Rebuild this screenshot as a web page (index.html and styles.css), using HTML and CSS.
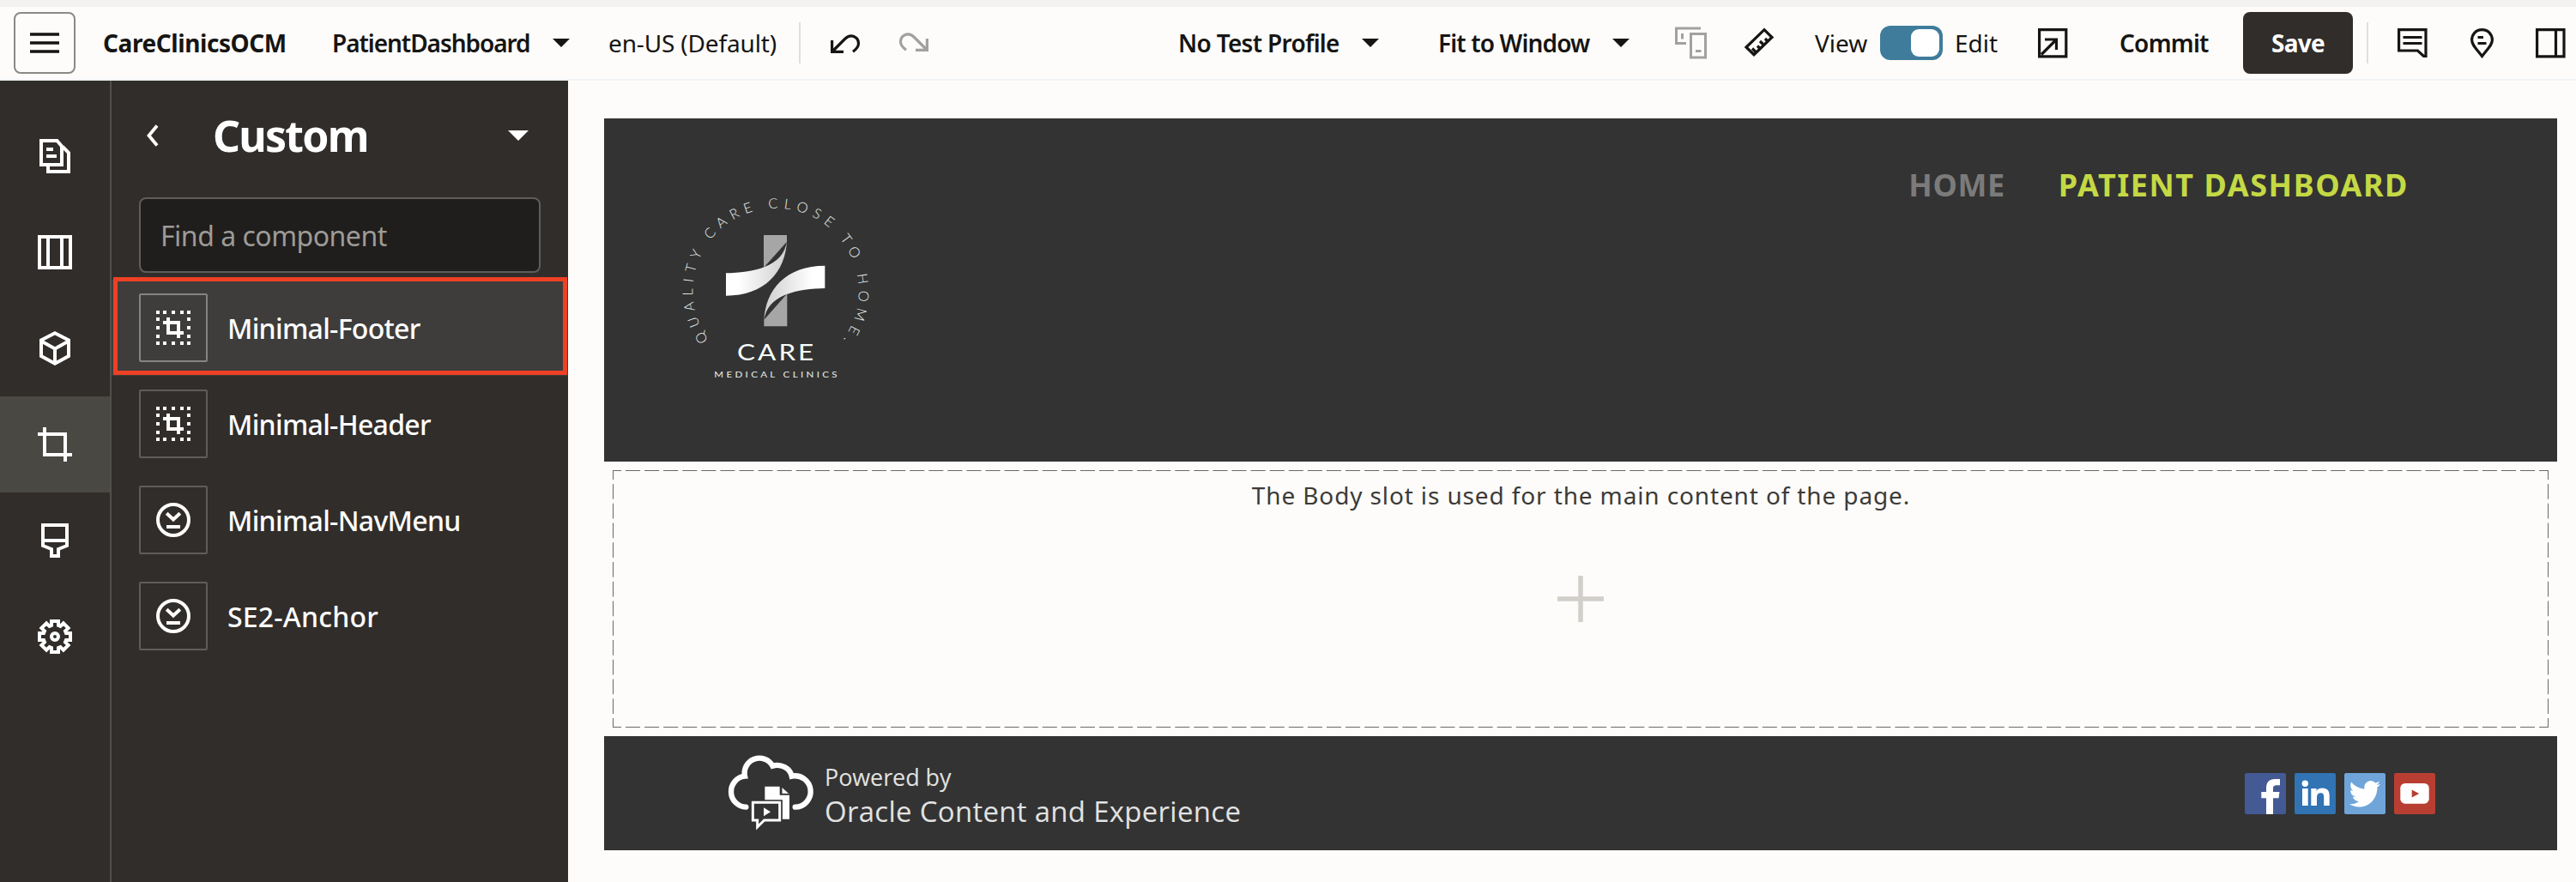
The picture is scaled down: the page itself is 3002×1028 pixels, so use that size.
FILE: index.html
```html
<!DOCTYPE html>
<html lang="en">
<head>
<meta charset="utf-8">
<title>CareClinicsOCM - PatientDashboard</title>
<link rel="stylesheet" href="styles.css">
</head>
<body>
<svg class="defs" width="0" height="0" aria-hidden="true">
  <symbol id="caret" viewBox="0 0 20 10"><path d="M0 0H20L10 10Z" fill="currentColor"/></symbol>
  <symbol id="template" viewBox="0 0 40 40">
    <path d="M0 2H4M8 2H12M18 2H22M28 2H32M36 2H40M0 10H4M36 10H40M0 20H4M36 20H40M0 30H4M36 30H40M0 38H4M8 38H12M18 38H22M28 38H32M36 38H40M8 14H28M14 8V28M12 26H32M26 12V32" fill="none" stroke="currentColor" stroke-width="4"/>
  </symbol>
  <symbol id="widget" viewBox="0 0 40 40">
    <g fill="none" stroke="currentColor" stroke-width="4"><circle cx="20" cy="20" r="18"/><path d="M12.2 12.2L20 19.5L27.8 12.2M12 28H28"/></g>
  </symbol>
</svg>

<header class="topbar">
  <button class="menu" aria-label="Menu"><svg width="34" height="24" viewBox="0 0 34 24"><path d="M0 2H34M0 12H34M0 22H34" stroke="currentColor" stroke-width="3.6"/></svg></button>
  <span class="label site">CareClinicsOCM</span>
  <span class="label page">PatientDashboard</span>
  <svg class="caret" width="20" height="10"><use href="#caret"/></svg>
  <span class="label locale">en-US (Default)</span>
  <span class="divider divider-left"></span>
  <svg class="icon undo" width="34" height="34" viewBox="0 0 34 34"><path d="M1.6 14V27.3H15M2 27L16.5 12.5C24 5 33 10.5 32.4 18.5C32.2 22.5 29 25 26 27.3" /></svg>
  <svg class="icon redo" width="34" height="34" viewBox="0 0 34 34"><path d="M32.4 12V25.3H19M32 25L17.5 10.5C10 3 1 8.5 1.6 16.5C1.8 20.5 5 23 8 25.3" /></svg>

  <span class="label profile">No Test Profile</span>
  <svg class="caret" width="20" height="10"><use href="#caret"/></svg>
  <span class="label fit">Fit to Window</span>
  <svg class="caret" width="20" height="10"><use href="#caret"/></svg>
  <svg class="icon devices" width="38" height="38" viewBox="0 0 38 38"><path d="M30 2H1.5V19.5H13M8.5 8V14.5M18.5 8.5H35.5V36H18.5ZM24 28.5H30.5"/></svg>
  <svg class="icon ruler" width="36" height="36" viewBox="0 0 36 36"><path d="M24 2.7L33 11.5L12 31.7L3 23Z"/><path d="M14.5 29L10 24.5M19 24.5L16 21.5M23.5 20.5L19 16M28 16L25 13"/></svg>
  <span class="label view">View</span>
  <span class="toggle"><span class="knob"></span></span>
  <span class="label edit">Edit</span>
  <svg class="icon open" width="35" height="35" viewBox="0 0 35 35"><path d="M1.6 1.6H32.8V32.8H1.6ZM4 30.5L21 13.5M8 13H21.5V25"/></svg>
  <span class="label commit">Commit</span>
  <button class="label save">Save</button>
  <span class="divider divider-right"></span>
  <svg class="icon comment" width="35" height="35" viewBox="0 0 35 35"><path d="M1.6 1.6H33V32.5H30.5L23.5 26H1.6ZM6.5 10.5H28.5M6.5 17.5H28.5"/></svg>
  <svg class="icon pin" width="35" height="35" viewBox="0 0 35 35"><path d="M17.5 1.7C10 1.7 5.6 7.5 5.6 13.5C5.6 19.5 11 24 17.5 32.5C24 24 29.4 19.5 29.4 13.5C29.4 7.5 25 1.7 17.5 1.7ZM12.5 10.5H19M12.5 17.5H22.5"/></svg>
  <svg class="icon panel-toggle" width="35" height="35" viewBox="0 0 35 35"><path d="M1.6 1.6H33V32.8H1.6ZM23.5 2V33"/></svg>
</header>

<div class="workspace">
  <nav class="rail">
    <a class="rail-item"><svg width="40" height="40" viewBox="0 0 40 40"><path d="M4 2H22.5L28 8.5V30H4ZM12 32V38H36V16L29 9M10 12H18M10 20H22"/></svg></a>
    <a class="rail-item"><svg width="40" height="40" viewBox="0 0 40 40"><path d="M2 2H38V38H2ZM12 2V38M28 2V38"/></svg></a>
    <a class="rail-item"><svg width="40" height="40" viewBox="0 0 40 40"><path d="M20 2.3L36 10.5V29L20 37.7L4 29V10.5ZM4 11.5L20 20.5L36 11.5M20 20.5V37"/></svg></a>
    <a class="rail-item active"><svg width="40" height="40" viewBox="0 0 40 40"><path d="M0 8H32V40M8 0V32H40"/></svg></a>
    <a class="rail-item"><svg width="40" height="40" viewBox="0 0 40 40"><path d="M6 2H34V26L24 30V38H16V30L6 26ZM6 20H34"/></svg></a>
    <a class="rail-item"><svg width="40" height="40" viewBox="-20 -20 40 40"><path d="M-4-13V-18H4V-13L6.4-12L9.9-15.6L15.6-9.9L12-6.4L13-4H18V4H13L12 6.4L15.6 9.9L9.9 15.6L6.4 12L4 13V18H-4V13L-6.4 12L-9.9 15.6L-15.6 9.9L-12 6.4L-13 4H-18V-4H-13L-12-6.4L-15.6-9.9L-9.9-15.6L-6.4-12Z"/><circle r="4"/></svg></a>
  </nav>

  <aside class="panel">
    <div class="panel-head">
      <svg class="back" width="14" height="26" viewBox="0 0 14 26"><path d="M12 1.5L2.5 13L12 24.5" fill="none" stroke="currentColor" stroke-width="3.8"/></svg>
      <h1 class="panel-title">Custom</h1>
      <svg class="panel-caret" width="24" height="12"><use href="#caret"/></svg>
    </div>
    <div class="search">Find a component</div>
    <ul class="components">
      <li class="component selected"><span class="thumb"><svg width="40" height="40"><use href="#template"/></svg></span><span class="name">Minimal-Footer</span></li>
      <li class="component"><span class="thumb"><svg width="40" height="40"><use href="#template"/></svg></span><span class="name">Minimal-Header</span></li>
      <li class="component"><span class="thumb"><svg width="40" height="40"><use href="#widget"/></svg></span><span class="name">Minimal-NavMenu</span></li>
      <li class="component"><span class="thumb"><svg width="40" height="40"><use href="#widget"/></svg></span><span class="name name-wide">SE2-Anchor</span></li>
    </ul>
  </aside>

  <main class="canvas">
    <header class="site-header">
      <svg class="logo" width="280" height="260" viewBox="0 0 840 780">
        <defs>
          <linearGradient id="ribbon"><stop offset=".2" stop-color="#fff"/><stop offset="1" stop-color="#cfcfcf"/></linearGradient>
          <path id="ring" d="M197 588A290 290 0 1 1 667 588"/>
        </defs>
        <text class="logo-ring" textLength="1273"><textPath href="#ring" textLength="1273" lengthAdjust="spacing">QUALITY CARE CLOSE TO HOME.</textPath></text>
        <g id="arm">
          <path d="M390 222H471V245L390 336Z" fill="#a6a6a6"/>
          <path d="M258 355C350 353 462 335 471 240C467 352 392 434 258 434Z" fill="url(#ribbon)"/>
        </g>
        <use href="#arm" transform="rotate(180 431 381.5)"/>
        <text class="logo-name" x="297" y="660" textLength="277" lengthAdjust="spacingAndGlyphs">CARE</text>
        <text class="logo-sub" x="217" y="719" textLength="440" lengthAdjust="spacingAndGlyphs">MEDICAL CLINICS</text>
      </svg>
      <nav class="site-nav">
        <a class="nav-link">HOME</a>
        <a class="nav-link current">PATIENT DASHBOARD</a>
      </nav>
    </header>

    <section class="slot">
      <svg class="slot-border" width="2256" height="300" viewBox="0 0 2256 300">
        <g fill="none" stroke="#6b6966" stroke-width="1">
          <path d="M0 .5H2256M0 299.5H2256" stroke-dasharray="17.08 5" stroke-dashoffset="7.08"/>
          <path d="M.5 0V300M2255.5 0V300" stroke-dasharray="17.75 5" stroke-dashoffset="6.75"/>
        </g>
      </svg>
      <p class="slot-text">The Body slot is used for the main content of the page.</p>
      <svg class="plus" width="54" height="54" viewBox="0 0 54 54"><path d="M0 27H54M27 0V54" stroke="#d2cfcb" stroke-width="5.5"/></svg>
    </section>

    <footer class="site-footer">
      <svg class="cloud" width="120" height="110" viewBox="0 0 360 330">
        <path d="M88 212A54.2 54.2 0 0 1 84 104A52.3 52.3 0 0 1 181 68A52 48 0 0 1 248 104A54.6 54.6 0 1 1 260 212" fill="none" stroke="#fff" stroke-width="19" stroke-linecap="round"/>
        <path d="M154 140H206V170H240V254H214V188H154Z" fill="#fff"/>
        <path d="M213 141L240 166H213Z" fill="#fff" stroke="#333" stroke-width="3"/>
        <path d="M112 196H206V258H154L128 284V258H112Z" fill="#333" stroke="#333" stroke-width="19"/>
        <path d="M112 196H206V258H152L128 282V258H112Z" fill="#333" stroke="#fff" stroke-width="9"/>
        <path d="M150 214L174 229L150 244Z" fill="#fff"/>
      </svg>
      <div class="powered"><span class="powered-by">Powered by</span><span class="product">Oracle Content and Experience</span></div>
      <div class="social">
        <svg class="social-icon facebook" width="48" height="48" viewBox="0 0 48 48"><path d="M25 48V29.3H19.3V22H25V17.5C25 11 28.5 7 35 7H41V14.3H37C34 14.3 33 15.5 33 18V22H40.5L39.5 29.3H33V48Z"/></svg>
        <svg class="social-icon linkedin" width="48" height="48" viewBox="0 0 48 48"><circle cx="12.3" cy="12.3" r="3.7"/><path d="M9 18H15.7V38H9ZM19.3 18H25.6V20.8C27 18.6 29.3 17.5 32.3 17.5C38.5 17.5 40.7 21 40.7 27V38H34.2V28.3C34.2 25 33.4 23.3 30.5 23.3C27.3 23.3 26 25.2 26 28.5V38H19.3Z"/></svg>
        <svg class="social-icon twitter" width="48" height="48" viewBox="0 0 48 48"><path transform="translate(5.8 5.6) scale(1.51 1.56)" d="M23.953 4.57a10 10 0 01-2.825.775 4.958 4.958 0 002.163-2.723c-.951.555-2.005.959-3.127 1.184a4.92 4.92 0 00-8.384 4.482C7.69 8.095 4.067 6.13 1.64 3.162a4.822 4.822 0 00-.666 2.475c0 1.71.87 3.213 2.188 4.096a4.904 4.904 0 01-2.228-.616v.06a4.923 4.923 0 003.946 4.827 4.996 4.996 0 01-2.212.085 4.936 4.936 0 004.604 3.417 9.867 9.867 0 01-6.102 2.105c-.39 0-.779-.023-1.17-.067a13.995 13.995 0 007.557 2.209c9.053 0 13.998-7.496 13.998-13.985 0-.21 0-.42-.015-.63A9.935 9.935 0 0024 4.59z"/></svg>
        <svg class="social-icon youtube" width="48" height="48" viewBox="0 0 48 48"><rect x="7.3" y="12" width="33.4" height="23.7" rx="5.5"/><path class="play" d="M20.7 19.5L29.2 24L20.7 28.5Z"/></svg>
      </div>
    </footer>
  </main>
</div>
</body>
</html>
```
FILE: styles.css
```css
* { box-sizing: border-box; }

body {
  margin: 0;
  height: 1028px;
  overflow: hidden;
  display: flex;
  flex-direction: column;
  background: #fdfcfa;
  color: #161513;
  font-family: "Noto Sans", "Open Sans", sans-serif;
}

.defs { position: absolute; }
svg { display: block; flex: none; }

/* Top toolbar */
.topbar {
  height: 94px;
  flex: none;
  display: flex;
  align-items: center;
  border-top: 8px solid #f3f2f0;
  border-bottom: 2px solid #f0f3f6;
}

.menu {
  width: 72px;
  height: 72px;
  margin: 0 0 0 16px;
  padding: 0;
  display: flex;
  align-items: center;
  justify-content: center;
  border: 2px solid #8b8986;
  border-radius: 8px;
  background: transparent;
  color: inherit;
}

.label {
  flex: none;
  font-size: 28px;
  line-height: 38px;
  white-space: nowrap;
}

.site { width: 215px; margin-left: 32px; font-weight: 700; letter-spacing: -.42px; }
.page { width: 232px; margin-left: 52px; font-weight: 600; letter-spacing: -1.05px; }
.locale { width: 196px; margin-left: 45px; letter-spacing: -.15px; }
.profile { width: 189px; margin-left: 291px; font-weight: 600; letter-spacing: -.7px; }
.fit { width: 178px; margin-left: 69px; font-weight: 600; letter-spacing: -.85px; }
.view { width: 61px; margin-left: 47px; }
.edit { width: 50px; margin-left: 14px; }
.commit { width: 104px; margin-left: 60px; font-weight: 600; letter-spacing: -.75px; }

.save {
  width: 128px;
  height: 72px;
  margin: 0 0 0 40px;
  padding: 0;
  border: 0;
  border-radius: 8px;
  background: #312d2a;
  color: #fff;
  font-family: inherit;
  font-weight: 700;
  letter-spacing: -.7px;
}

.caret { margin-left: 25px; }

.divider { flex: none; width: 2px; height: 48px; background: #e1dfdc; }
.divider-left { margin-left: 26px; }
.divider-right { margin-left: 16px; }

.icon { fill: none; stroke: #161513; stroke-width: 3.2; }
.undo { margin-left: 35px; }
.redo { margin-left: 46px; stroke: #a3a19f; }
.devices { margin-left: 53px; stroke: #a3a19f; stroke-width: 3; }
.ruler { margin-left: 42px; }
.open { margin-left: 47px; }
.comment { margin-left: 34px; }
.pin { margin-left: 46px; }
.panel-toggle { margin-left: 45px; }

.toggle {
  flex: none;
  display: flex;
  justify-content: flex-end;
  width: 73px;
  height: 40px;
  margin-left: 15px;
  padding: 4px;
  border-radius: 12px;
  background: #3f7c9c;
}

.knob { width: 33px; height: 32px; border-radius: 9px; background: #fff; }

/* Workspace */
.workspace { flex: 1; display: flex; min-height: 0; }

.rail {
  flex: none;
  width: 130px;
  padding-top: 32px;
  border-right: 2px solid #514e4b;
  background: #312d2a;
}

.rail-item {
  height: 112px;
  display: flex;
  align-items: center;
  justify-content: center;
  fill: none;
  stroke: #fff;
  stroke-width: 4;
}

.rail-item.active { background: #4a4843; }

.panel { flex: none; width: 532px; background: #312d2a; color: #fff; }

.panel-head {
  height: 128px;
  margin-bottom: 8px;
  padding: 0 46px 0 41px;
  display: flex;
  align-items: center;
}

.panel-title {
  margin: 0 0 0 63px;
  font-size: 50px;
  font-weight: 700;
  line-height: 68px;
  letter-spacing: -1.8px;
}

.panel-caret { margin: 0 0 0 auto; }

.search {
  width: 468px;
  height: 88px;
  margin: 0 0 8px 32px;
  padding-left: 23px;
  border: 2px solid #5f5d5b;
  border-radius: 8px;
  background: #201e1c;
  color: #9d9b98;
  font-size: 32px;
  line-height: 86px;
  letter-spacing: -.5px;
}

.components { margin: 0; padding: 0; list-style: none; }

.component {
  height: 112px;
  padding-left: 32px;
  display: flex;
  align-items: center;
  gap: 23px;
}

.component.selected { position: relative; background: #3e3d3b; }

.component.selected::after {
  content: "";
  position: absolute;
  inset: -3px 1px 1px 2px;
  border: 5px solid #ed4024;
}

.thumb {
  width: 80px;
  height: 80px;
  display: flex;
  align-items: center;
  justify-content: center;
  border: 2px solid #5f5d5b;
  border-radius: 2px;
}

.selected .thumb { border-color: #858482; }

.name { font-size: 32px; font-weight: 500; letter-spacing: -.7px; }
.name-wide { letter-spacing: .2px; }

/* Page being edited */
.canvas { flex: 1; padding: 44px 22px 0 42px; }

.site-header {
  height: 400px;
  padding: 62px 173px 0 56px;
  display: flex;
  align-items: flex-start;
  justify-content: space-between;
  background: #333;
}

.logo text { font-family: Lato, sans-serif; fill: #e9efec; }
.logo .logo-ring { font-size: 49px; font-weight: 300; }
.logo .logo-name { font-size: 83px; letter-spacing: 8px; fill: #f6fffb; }
.logo .logo-sub { font-size: 31px; letter-spacing: 9px; }

.site-nav { display: flex; gap: 62px; margin-top: -8px; }

.nav-link {
  color: #7b7b7b;
  font-size: 36px;
  font-weight: 700;
  line-height: 48px;
  letter-spacing: .6px;
}

.nav-link.current { color: #c4d944; letter-spacing: 1.55px; }

.slot {
  position: relative;
  height: 300px;
  margin: 10px;
  display: flex;
  flex-direction: column;
  align-items: center;
}

.slot-border { position: absolute; inset: 0; }

.slot-text {
  margin: 10px 0 75px;
  padding-left: 1px;
  color: #3c3b38;
  font-size: 28px;
  line-height: 38px;
  letter-spacing: .87px;
}

.site-footer {
  height: 133px;
  padding: 0 142px 0 136px;
  display: flex;
  background: #333;
}

.cloud { margin-top: 12px; }

.powered {
  margin: 27px 0 0 1px;
  display: flex;
  flex-direction: column;
  color: #e2e2e2;
  font-family: "Open Sans", "Noto Sans", sans-serif;
}

.powered-by { font-size: 27px; line-height: 41px; letter-spacing: -.1px; }
.product { font-size: 33px; line-height: 40px; letter-spacing: .28px; }

.social { display: flex; gap: 10px; margin: 43px 0 0 auto; }
.social-icon { border-radius: 2px; fill: #fff; }
.facebook { background: #435a94; }
.linkedin { background: #3173b3; }
.twitter { background: #70a5d9; }
.youtube { background: #b93e32; }
.youtube .play { fill: #b93e32; }
```
